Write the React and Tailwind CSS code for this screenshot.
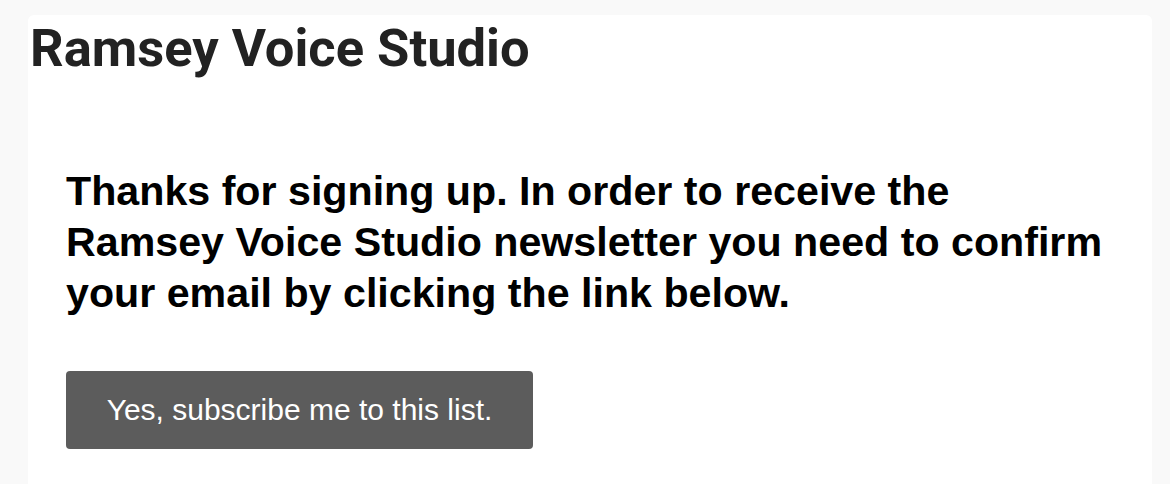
import React from "react";

const App = () => {
  return (
    <div className="min-h-[484px] bg-[#f9f9f9] pt-[15px] pl-[28px] pr-[18px]">
      {/* White card */}
      <div className="min-h-[469px] bg-white rounded-t-md">
        <h1
          className="pl-[2px] pt-[7px] text-[52.5px] font-bold leading-none text-[#222222]"
          style={{ fontFamily: "Roboto, sans-serif" }}
        >
          Ramsey Voice Studio
        </h1>

        <div
          className="pl-[38px] pt-[91px]"
          style={{ fontFamily: '"Liberation Sans", Arial, sans-serif' }}
        >
          <p className="max-w-[1080px] text-[41.2px] font-bold leading-[51px] text-black">
            Thanks for signing up. In order to receive the
            <br />
            Ramsey Voice Studio newsletter you need to confirm
            <br />
            your email by clicking the link below.
          </p>

          <button
            type="button"
            className="mt-[52px] w-[467px] h-[78px] flex items-center justify-center rounded-[4px] bg-[#5c5c5c] text-[30px] text-white"
          >
            Yes, subscribe me to this list.
          </button>
        </div>
      </div>
    </div>
  );
};

export default App;
